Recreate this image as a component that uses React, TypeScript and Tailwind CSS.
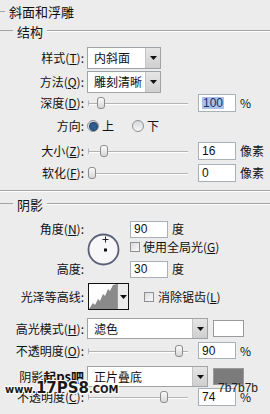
import type { ReactNode } from "react";

const CJK = "font-['Noto_Sans_CJK_SC','Noto_Sans',sans-serif]";

// ─── Small controls ───────────────────────────────────────────────────────────

function GroupTitle({ text, indent, size }: { text: string; indent: number; size: string }) {
    return (
        <div className="flex items-center">
            <div className="h-[2px] border-t border-[#a3a3a3] border-b-white bg-transparent" style={{ width: indent }} />
            <span className={`px-[4px] leading-none text-[#111] ${size}`}>{text}</span>
            <div className="h-[2px] flex-1 border-t border-b border-t-[#a3a3a3] border-b-white" />
        </div>
    );
}

function Label({ children }: { children: ReactNode }) {
    return <div className="w-[84px] shrink-0 text-right text-[12px] leading-none text-[#111]">{children}</div>;
}

function Arrow() {
    return (
        <div className="flex h-full w-[15px] items-center justify-center border-l border-[#c4c4c4] bg-gradient-to-b from-[#e6e6e6] to-[#cfcfcf]">
            <svg width="7" height="4" viewBox="0 0 7 4">
                <path d="M0 0h7L3.5 4z" fill="#111" />
            </svg>
        </div>
    );
}

function Select({ value, width }: { value: string; width: string }) {
    return (
        <div className={`flex h-full items-center border border-[#9ea3a8] bg-white ${width}`}>
            <span className="flex-1 pl-[6px] text-[12px] leading-none text-[#111]">{value}</span>
            <Arrow />
        </div>
    );
}

function Slider({ left }: { left: number }) {
    return (
        <div className="relative h-full w-[100px]">
            <div className="absolute left-0 right-0 top-1/2 h-[2px] border-t border-b border-t-[#b3b3b3] border-b-white" />
            <div className="absolute left-0 top-1/2 h-[5px] w-px -translate-y-1/2 bg-[#b3b3b3]" />
            <div
                className="absolute top-1/2 h-[12px] w-[8px] -translate-y-1/2 rounded-[3px] border border-[#8c8c8c] bg-gradient-to-b from-[#fbfbfb] to-[#d6d6d6]"
                style={{ left }}
            />
        </div>
    );
}

function Input({ value, selected }: { value: string; selected?: boolean }) {
    return (
        <div className="flex h-full w-[38px] items-center border border-[#a9b0b6] bg-white pl-[3px] font-['Liberation_Sans',sans-serif] text-[12px] leading-none text-[#111]">
            {selected ? <span className="bg-[#a9c1e8] px-px text-[#1c2c6e]">{value}</span> : value}
        </div>
    );
}

function Checkbox() {
    return <div className="h-[10px] w-[10px] shrink-0 border border-[#8f9092] bg-gradient-to-br from-[#dcdcdc] to-[#fafafa]" />;
}

function Radio({ on }: { on?: boolean }) {
    return (
        <div className="flex h-[12px] w-[12px] items-center justify-center rounded-full border border-[#8d9196] bg-gradient-to-b from-[#d8d8d8] to-[#f6f6f6]">
            {on && <div className="h-[7px] w-[7px] rounded-full bg-[#2d5e8e] ring-1 ring-[#1b3f66]" />}
        </div>
    );
}

function U({ c }: { c: string }) {
    return <span className="underline underline-offset-1">{c}</span>;
}

// ─── Rows ─────────────────────────────────────────────────────────────────────

function SliderRow({
    label,
    left,
    value,
    unit,
    selected,
    className,
}: {
    label: ReactNode;
    left: number;
    value: string;
    unit: string;
    selected?: boolean;
    className: string;
}) {
    return (
        <div className={`flex items-center ${className}`}>
            <Label>{label}</Label>
            <div className="ml-[4px] h-full">
                <Slider left={left} />
            </div>
            <div className="ml-[10px] h-full">
                <Input value={value} selected={selected} />
            </div>
            <span className="ml-[4px] text-[12px] leading-none text-[#111]">{unit}</span>
        </div>
    );
}

// ─── Page ─────────────────────────────────────────────────────────────────────

export default function App() {
    return (
        <div className={`relative h-[414px] w-[270px] overflow-hidden bg-[#ececec] ${CJK}`}>
            <div className="flex h-[23px] items-center">
                <GroupTitle text="斜面和浮雕" indent={5} size="text-[13px]" />
            </div>
            <div className="flex h-[16px] items-center">
                <div className="w-full">
                    <GroupTitle text="结构" indent={13} size="text-[13px]" />
                </div>
            </div>

            {/* 结构 */}
            <div className="mt-[8px] flex h-[22px] items-center">
                <Label>
                    样式(<U c="T" />):
                </Label>
                <div className="ml-[3px] h-full">
                    <Select value="内斜面" width="w-[74px]" />
                </div>
            </div>
            <div className="mt-[2px] flex h-[22px] items-center">
                <Label>
                    方法(<U c="Q" />):
                </Label>
                <div className="ml-[3px] h-full">
                    <Select value="雕刻清晰" width="w-[74px]" />
                </div>
            </div>
            <SliderRow
                className="mt-[1px] h-[18px]"
                label={<>深度(<U c="D" />):</>}
                left={9}
                value="100"
                unit="%"
                selected
            />
            <div className="mt-[5px] flex h-[18px] items-center text-[12px] leading-none text-[#111]">
                <Label>方向:</Label>
                <div className="ml-[3px]">
                    <Radio on />
                </div>
                <span className="ml-[3px]">上</span>
                <div className="ml-[18px]">
                    <Radio />
                </div>
                <span className="ml-[3px]">下</span>
            </div>
            <SliderRow className="mt-[7px] h-[18px]" label={<>大小(<U c="Z" />):</>} left={12} value="16" unit="像素" />
            <SliderRow className="mt-[4px] h-[18px]" label={<>软化(<U c="F" />):</>} left={0} value="0" unit="像素" />

            <div className="mt-[8px] h-[2px] border-t border-b border-t-[#a3a3a3] border-b-white" />

            {/* 阴影 */}
            <div className="mt-[4px] flex h-[16px] items-center">
                <div className="w-full">
                    <GroupTitle text="阴影" indent={13} size="text-[13px]" />
                </div>
            </div>

            <div className="mt-[7px] flex h-[60px] text-[12px] leading-none text-[#111]">
                <div className="flex w-[84px] shrink-0 flex-col justify-between text-right">
                    <div className="flex h-[20px] items-center justify-end">
                        角度(<U c="N" />):
                    </div>
                    <div className="flex h-[20px] items-center justify-end">高度:</div>
                </div>
                <div className="ml-[3px] flex w-[39px] items-center">
                    <svg width="33" height="33" viewBox="0 0 33 33">
                        <circle cx="16.5" cy="16.5" r="15" fill="#f7f7f9" stroke="#5a6078" strokeWidth="1.8" />
                        <path d="M18.5 3.5v6M15.5 6.5h6" stroke="#222" strokeWidth="1" />
                        <rect x="17" y="15.5" width="3" height="3" fill="#111" />
                    </svg>
                </div>
                <div className="ml-[4px] flex flex-col">
                    <div className="flex h-[20px] items-center">
                        <div className="h-[17px]">
                            <Input value="90" />
                        </div>
                        <span className="ml-[4px]">度</span>
                    </div>
                    <div className="flex h-[20px] items-center pb-[5px]">
                        <Checkbox />
                        <span className="ml-[3px]">
                            使用全局光(<U c="G" />)
                        </span>
                    </div>
                    <div className="flex h-[20px] items-center">
                        <div className="h-[17px]">
                            <Input value="30" />
                        </div>
                        <span className="ml-[4px]">度</span>
                    </div>
                </div>
            </div>

            <div className="mt-[4px] flex h-[27px] items-center text-[12px] leading-none text-[#111]">
                <Label>光泽等高线:</Label>
                <div className="ml-[4px] flex h-full w-[41px] border border-[#111] bg-white">
                    <svg width="28" height="25" viewBox="0 0 28 25">
                        <path d="M0 25L4 19L6 21L9 15L11 17L14 10L16 12L19 5L21 7L24 1L28 0V25Z" fill="#8a8a8a" />
                    </svg>
                    <div className="flex flex-1 items-center justify-center border-l border-[#999] bg-[#ececec]">
                        <svg width="7" height="4" viewBox="0 0 7 4">
                            <path d="M0 0h7L3.5 4z" fill="#111" />
                        </svg>
                    </div>
                </div>
                <div className="ml-[15px]">
                    <Checkbox />
                </div>
                <span className="ml-[4px]">
                    消除锯齿(<U c="L" />)
                </span>
            </div>

            <div className="mt-[8px] flex h-[21px] items-center">
                <Label>
                    高光模式(<U c="H" />):
                </Label>
                <div className="ml-[3px] h-full">
                    <Select value="滤色" width="w-[121px]" />
                </div>
                <div className="ml-[5px] h-[17px] w-[31px] border border-[#9a9a9a] bg-white" />
            </div>
            <SliderRow className="mt-[3px] h-[17px]" label={<>不透明度(<U c="O" />):</>} left={87} value="90" unit="%" />

            <div className="mt-[7px] flex h-[21px] items-center">
                <Label>
                    阴影<span className="text-[13px] font-bold">起ps吧</span>
                </Label>
                <div className="ml-[3px] h-full">
                    <Select value="正片叠底" width="w-[121px]" />
                </div>
                <div className="ml-[5px] h-[17px] w-[31px] border border-[#9a9a9a] bg-[#7b7b7b]" />
            </div>
            <SliderRow className="mt-[1px] h-[18px]" label={<>不透明度(<U c="C" />):</>} left={72} value="74" unit="%" />

            {/* watermark overlays */}
            <div className="absolute left-[5px] top-[381px] flex items-baseline font-['DejaVu_Sans',sans-serif] font-bold leading-none text-[#1a1a1a] [text-shadow:1px_1px_0_#fff,-1px_-1px_0_#fff,1px_-1px_0_#fff,-1px_1px_0_#fff]">
                <span className="text-[10px]">www.</span>
                <span className="text-[15px]">17PS8</span>
                <span className="text-[10px]">.COM</span>
            </div>
            <div className="absolute left-[218px] top-[382px] font-['Liberation_Sans',sans-serif] text-[12px] leading-none text-[#222]">
                7b7b7b
            </div>
        </div>
    );
}
